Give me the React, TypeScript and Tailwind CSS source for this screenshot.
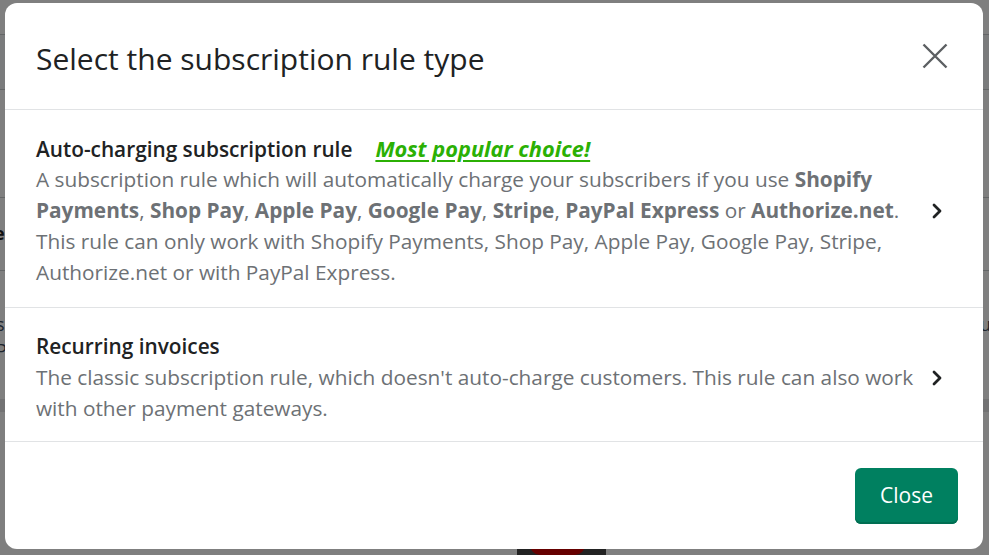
function Chevron() {
  return (
    <svg width="12" height="16" viewBox="0 0 12 16" fill="none" className="shrink-0">
      <path d="M3 2l6 6-6 6" stroke="#202223" strokeWidth="2.8" strokeLinecap="round" strokeLinejoin="round" />
    </svg>
  );
}

function CloseIcon() {
  return (
    <svg width="26" height="26" viewBox="0 0 26 26" fill="none" className="shrink-0">
      <path d="M1.5 1.5l23 23M24.5 1.5l-23 23" stroke="#5c5f62" strokeWidth="2.4" />
    </svg>
  );
}

function Background() {
  return (
    <div className="flex h-full w-full flex-col bg-[#f4f6f8] text-[18px] text-[#202223]">
      <div className="h-[37px] border-b border-[#c9cccf] bg-white" />
      <div className="h-[57px] border-b border-[#c9cccf]" />
      <div className="h-[114px] border-b border-[#c9cccf] bg-white" />
      <div className="flex h-[76px] items-center border-b border-[#c9cccf] bg-white font-bold">
        <span className="-ml-[6px]">e</span>
      </div>
      <div className="bg-white pt-[40px] pb-[36px] leading-[26px] text-[#3c4a5c]">
        <div className="flex justify-between">
          <span className="-ml-[4px]">s</span>
          <span className="-mr-[2px]">u</span>
        </div>
        <div>
          <span className="-ml-[4px]">P</span>
        </div>
      </div>
      <div className="h-[14px] bg-[#e4e5e7]" />
      <div className="flex-1 bg-white pt-[123px] pl-[517px]">
        <div className="flex h-[20px] w-[89px] items-start gap-[6px] bg-[#444] px-[13px]">
          <div className="h-[20px] w-[55px] rounded-full bg-[#c00]" />
        </div>
      </div>
    </div>
  );
}

export default function App() {
  return (
    <div className="relative h-[555px] w-full overflow-hidden" style={{ fontFamily: '"Open Sans", "Noto Sans", sans-serif' }}>
      <Background />
      <div className="absolute inset-0 bg-black/50" />
      <div className="absolute inset-0 pt-[3px] pr-[6px] pb-[6px] pl-[5px]">
        <div className="flex h-full flex-col rounded-[12px] bg-white">
          <div className="flex h-[107px] items-center justify-between border-b border-[#e1e3e5] pl-[31px] pr-[35px]">
            <h2 className="pt-[5px] text-[30px] font-normal text-[#202223]">Select the subscription rule type</h2>
            <CloseIcon />
          </div>

          <div className="flex items-center gap-4 border-b border-[#e1e3e5] pt-[23px] pb-[19px] pl-[31px] pr-[40px]">
            <div className="flex-1 text-[20.8px] leading-[31px] text-[#6d7175]">
              <div className="h-[31px] font-semibold text-[#202223]">
                Auto-charging subscription rule
                <span className="ml-[23px] text-[21.8px] leading-[31px] font-bold italic text-[#2bb004] underline underline-offset-[3px]">
                  Most popular choice!
                </span>
              </div>
              <p>
                A subscription rule which will automatically charge your subscribers if you use <b>Shopify Payments</b>, <b>Shop Pay</b>, <b>Apple Pay</b>,{' '}
                <b>Google Pay</b>, <b>Stripe</b>, <b>PayPal Express</b> or <b>Authorize.net</b>. This rule can only work with Shopify Payments, Shop Pay,
                Apple Pay, Google Pay, Stripe, Authorize.net or with PayPal Express.
              </p>
            </div>
            <Chevron />
          </div>

          <div className="flex items-center gap-4 border-b border-[#e1e3e5] pt-[23px] pb-[17px] pl-[31px] pr-[40px]">
            <div className="flex-1 text-[20.8px] leading-[31px] text-[#6d7175]">
              <div className="font-semibold text-[#202223]">Recurring invoices</div>
              <p>The classic subscription rule, which doesn't auto-charge customers. This rule can also work with other payment gateways.</p>
            </div>
            <Chevron />
          </div>

          <div className="flex flex-1 items-center justify-end pr-[25px]">
            <button className="h-[56px] w-[103px] rounded-[6px] bg-[#008060] text-[21px] text-white shadow-[inset_0_-2px_0_#006e52]">
              Close
            </button>
          </div>
        </div>
      </div>
    </div>
  );
}
